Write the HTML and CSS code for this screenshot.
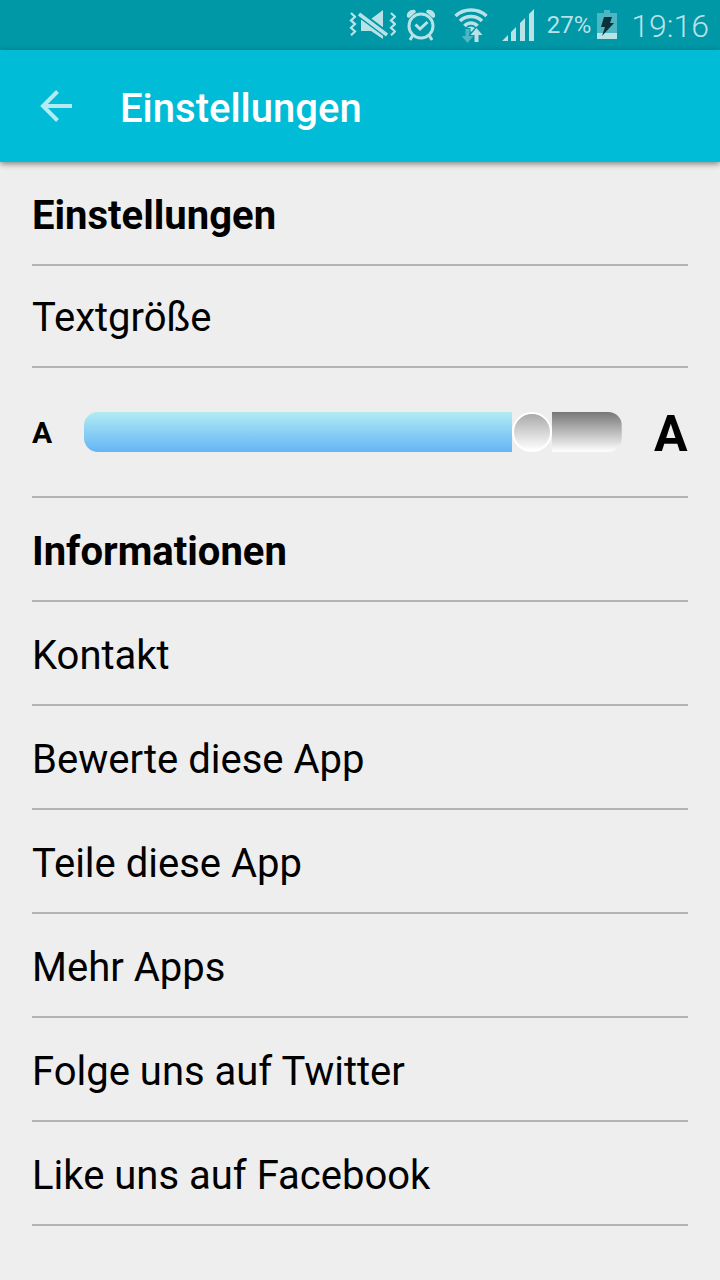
FILE: index.html
```
<!DOCTYPE html>
<html lang="de">
<head>
<meta charset="utf-8">
<meta name="viewport" content="width=device-width, initial-scale=1">
<title>Einstellungen</title>
<link rel="stylesheet" href="styles.css">
</head>
<body>
<div class="status-bar">
  <svg class="icon-mute" width="48" height="34" viewBox="0 0 48 34" aria-hidden="true">
    <g fill="none" stroke="currentColor" stroke-width="2.200">
      <path d="M3 5l4 3.700l-4 3.700l4 3.700l-4 3.700l4 3.700l-4 3.700"/>
      <path d="M43 5l4 3.700l-4 3.700l4 3.700l-4 3.700l4 3.700l-4 3.700"/>
    </g>
    <path fill="currentColor" d="M13 11h10L35 2v29L23 23H13z"/>
    <path class="mute-gap" d="M10 5L41 28"/>
    <path fill="none" stroke="currentColor" stroke-width="3.500" d="M11 6L39 27"/>
  </svg>
  <svg class="icon-alarm" width="32" height="34" viewBox="0 0 32 34" aria-hidden="true">
    <g fill="none" stroke="currentColor">
      <circle cx="16" cy="18" r="12" stroke-width="3"/>
      <path stroke-width="3" d="M10.500 16.500l4.500 4.500l7.500-7"/>
      <path stroke-width="3" d="M8 27l-3 5M24 27l3 5"/>
    </g>
    <path fill="currentColor" d="M2 9C1 5 5 1 10 2l1 2L4 10zM30 9C31 5 27 1 22 2l-1 2l7 6z"/>
  </svg>
  <svg class="icon-wifi" width="34" height="34" viewBox="0 0 34 34" aria-hidden="true">
    <g fill="none" stroke="currentColor" stroke-width="3.500">
      <path d="M1.500 8C10 0 24 0 32.500 8"/>
      <path d="M6 13C12 7 22 7 28 13"/>
      <path d="M10.500 18C14 14 20 14 23.500 18"/>
    </g>
    <path fill="currentColor" d="M13 20q4-3 8 0L17 24z"/>
    <path class="wifi-down" d="M11.500 21h4v7h4l-6 7l-6-7h4z"/>
    <path class="wifi-up" d="M22.500 20l6 7h-4v7h-4v-7h-4z"/>
  </svg>
  <svg class="icon-signal" width="34" height="34" viewBox="0 0 34 34" aria-hidden="true">
    <path fill="currentColor" d="M1 33l6-6v6zM10 24l5-5v14h-5zM19 15l5-5v23h-5zM28 6l5-5v32h-5z"/>
  </svg>
  <span class="battery-level">27%</span>
  <svg class="icon-battery" width="20" height="32" viewBox="0 0 20 32" aria-hidden="true">
    <path fill="#4db6c3" d="M7 1h6v3h7v20H0V4h7z"/>
    <path fill="currentColor" d="M0 24h20v6H0z"/>
    <path fill="#0b3238" d="M7 8h8l-2 6h4L5 27l3-9H4z"/>
  </svg>
  <time class="clock">19:16</time>
</div>

<header class="app-bar">
  <button class="back" type="button" aria-label="Zurück">
    <svg width="32" height="32" viewBox="0 0 32 32" aria-hidden="true">
      <path fill="none" stroke="currentColor" stroke-width="4" d="M17.500 1.500L3 16l14.500 14.500M3 16h29"/>
    </svg>
  </button>
  <h1 class="app-title">Einstellungen</h1>
</header>

<main class="settings">
  <h2 class="section-title">Einstellungen</h2>
  <label class="row row-label" for="text-size">Textgröße</label>
  <div class="row row-slider">
    <span class="letter-small">A</span>
    <input class="slider" id="text-size" type="range" min="0" max="100" value="86">
    <span class="letter-large">A</span>
  </div>
  <h2 class="section-title">Informationen</h2>
  <button class="row" type="button">Kontakt</button>
  <button class="row" type="button">Bewerte diese App</button>
  <button class="row" type="button">Teile diese App</button>
  <button class="row" type="button">Mehr Apps</button>
  <button class="row" type="button">Folge uns auf Twitter</button>
  <button class="row" type="button">Like uns auf Facebook</button>
</main>
</body>
</html>
```

FILE: styles.css
```
* {
  box-sizing: border-box;
}

body {
  margin: 0;
  min-height: 100vh;
  background: #eee;
  color: #000;
  font-family: Roboto, sans-serif;
  font-size: 40px;
  line-height: 48px;
}

.status-bar {
  display: flex;
  align-items: center;
  justify-content: flex-end;
  height: 50px;
  padding-right: 11px;
  background: #0097a7;
  color: #b9e2e7;
}

.icon-mute {
  margin-right: 9px;
}

.mute-gap {
  fill: none;
  stroke: #0097a7;
  stroke-width: 7;
}

.icon-alarm {
  margin-right: 17px;
}

.icon-wifi {
  margin-right: 13px;
  overflow: visible;
}

.wifi-down {
  fill: #4db6c3;
}

.wifi-down,
.wifi-up {
  stroke: #0097a7;
  stroke-width: 2;
  paint-order: stroke;
}

.wifi-up {
  fill: currentColor;
}

.icon-signal {
  margin-right: 12px;
}

.battery-level {
  margin-right: 6px;
  font-size: 24px;
  line-height: 32px;
}

.icon-battery {
  margin-right: 14px;
}

.clock {
  padding-top: 2px;
  font-size: 32px;
  font-weight: 300;
  line-height: 48px;
}

.app-bar {
  display: flex;
  align-items: center;
  height: 112px;
  padding: 0 40px;
  background: #00bcd7;
  box-shadow: 0 2px 6px rgba(0, 0, 0, 0.45);
}

.back {
  display: flex;
  margin: 0 48px 0 0;
  padding: 0;
  border: 0;
  background: none;
  color: #b3ebf3;
}

.app-title {
  margin: 0;
  padding-top: 6px;
  color: #fff;
  font-size: 40px;
  font-weight: 500;
}

.settings {
  padding: 0 32px;
}

.section-title,
.row {
  display: flex;
  align-items: center;
  width: 100%;
  height: 104px;
  margin: 0;
  padding: 6px 0 0;
  border: 0;
  border-bottom: 2px solid #b3b3b3;
  background: none;
  color: inherit;
  font: inherit;
  text-align: left;
}

.section-title {
  font-weight: 700;
}

.row-label {
  height: 102px;
  padding-top: 4px;
}

.row-slider {
  height: 130px;
  padding: 0;
  font-weight: 700;
}

.letter-small,
.letter-large {
  padding-top: 2px;
}

.letter-small {
  width: 20px;
  font-size: 30px;
}

.letter-large {
  width: 34px;
  padding-top: 4px;
  font-size: 50px;
}

.slider {
  flex: 1;
  min-width: 0;
  height: 40px;
  margin: 0 32px;
  border-radius: 14px;
  appearance: none;
  background:
    linear-gradient(#b2ebf2, #64b5f6) left / calc((100% - 40px) * 0.86) 100% no-repeat,
    linear-gradient(#777, #fff) right / calc((100% - 40px) * 0.14) 100% no-repeat;
}

.slider::-webkit-slider-thumb {
  width: 40px;
  height: 40px;
  border: 2px solid #fff;
  border-radius: 50%;
  appearance: none;
  background: linear-gradient(#aaa, #fff);
}
```
